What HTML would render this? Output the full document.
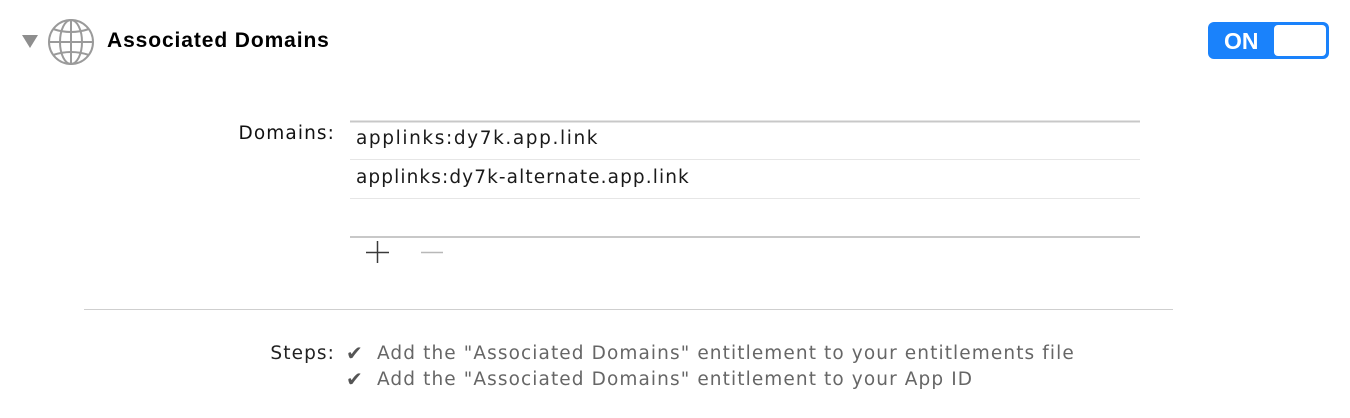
<!DOCTYPE html>
<html><head><meta charset="utf-8"><style>
html,body{margin:0;padding:0;background:#fff;width:1350px;height:418px;overflow:hidden;font-family:"DejaVu Sans",sans-serif;}
.a{position:absolute;white-space:nowrap}
.t{font-size:18.5px;letter-spacing:1.1px}
</style></head><body>
<svg class="a" style="left:0;top:0" width="1350" height="418">
<polygon points="22,35 38,35 30,48" fill="#8e8e8e"/>
<g fill="none" stroke="#9a9a9a" stroke-width="2">
<circle cx="71" cy="42" r="22"/>
<ellipse cx="71" cy="42" rx="11" ry="22"/>
<line x1="71" y1="20" x2="71" y2="64"/>
<line x1="49" y1="42" x2="93" y2="42"/>
<path d="M53,29 Q71,35 89,29"/>
<path d="M53,55 Q71,49 89,55"/>
</g>
<rect x="1208" y="22" width="121" height="37" rx="6" fill="#1a82fb"/>
<rect x="1274" y="25" width="52" height="31" rx="4" fill="#fff"/>
<line x1="350" y1="121.5" x2="1140" y2="121.5" stroke="#c8c8c8" stroke-width="2"/>
<line x1="350" y1="159.5" x2="1140" y2="159.5" stroke="#e6e6e6" stroke-width="1"/>
<line x1="350" y1="198.5" x2="1140" y2="198.5" stroke="#e6e6e6" stroke-width="1"/>
<line x1="350" y1="237" x2="1140" y2="237" stroke="#c8c8c8" stroke-width="2"/>
<line x1="366" y1="252.5" x2="389" y2="252.5" stroke="#3a3a3a" stroke-width="1.5"/>
<line x1="377.5" y1="241" x2="377.5" y2="263" stroke="#3a3a3a" stroke-width="1.5"/>
<line x1="421" y1="252.5" x2="443" y2="252.5" stroke="#b8b8b8" stroke-width="1.5"/>
<line x1="84" y1="309.5" x2="1173" y2="309.5" stroke="#cfcfcf" stroke-width="1"/>
</svg>
<div class="a" style="left:107px;top:29px;font-size:21px;font-weight:bold;color:#000;font-family:'Liberation Sans',sans-serif;letter-spacing:0.9px">Associated Domains</div>
<div class="a" style="left:1224px;top:28px;font-size:23px;font-weight:bold;color:#fff;font-family:'Liberation Sans',sans-serif">ON</div>
<div class="a t" style="left:150px;width:185px;text-align:right;top:123px;color:#111">Domains:</div>
<div class="a t" style="left:356px;top:128px;color:#1a1a1a;letter-spacing:1.6px">applinks:dy7k.app.link</div>
<div class="a t" style="left:356px;top:167px;color:#1a1a1a">applinks:dy7k-alternate.app.link</div>
<div class="a t" style="left:150px;width:185px;text-align:right;top:343px;color:#222">Steps:</div>
<div class="a" style="left:346px;top:341px;font-size:20px;color:#555">✔</div>
<div class="a" style="left:346px;top:367px;font-size:20px;color:#555">✔</div>
<div class="a t" style="left:377px;top:343px;color:#666">Add the "Associated Domains" entitlement to your entitlements file</div>
<div class="a t" style="left:377px;top:369px;color:#666">Add the "Associated Domains" entitlement to your App ID</div>
</body></html>
